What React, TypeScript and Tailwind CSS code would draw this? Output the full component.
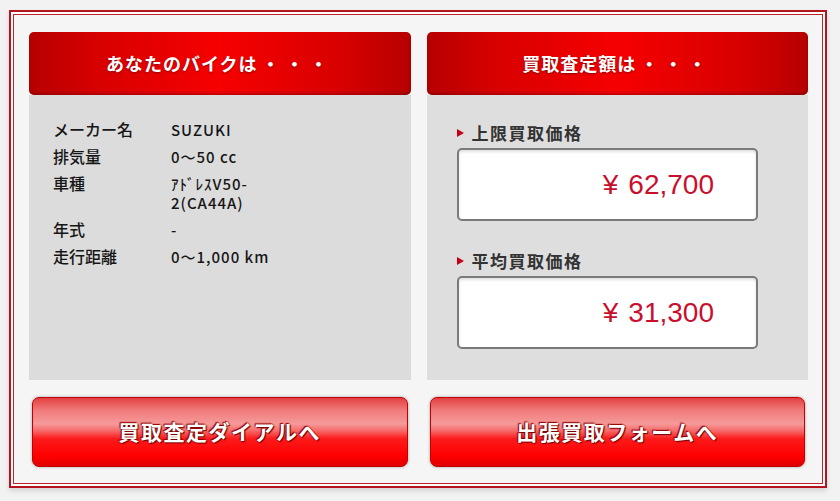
import React from 'react';

const jp = { fontFamily: '"Noto Sans CJK JP", "Noto Sans", sans-serif' };

const specs: Array<{ label: string; value: string[] }> = [
  { label: 'メーカー名', value: ['SUZUKI'] },
  { label: '排気量', value: ['0〜50 cc'] },
  { label: '車種', value: ['ｱﾄﾞﾚｽV50-', '2(CA44A)'] },
  { label: '年式', value: ['-'] },
  { label: '走行距離', value: ['0〜1,000 km'] },
];

const prices = [
  { label: '上限買取価格', amount: '62,700' },
  { label: '平均買取価格', amount: '31,300' },
];

function Header({ children }: { children: React.ReactNode }) {
  return (
    <div className="flex h-[63px] items-center justify-center rounded-[5px] bg-[linear-gradient(90deg,#b60000_0%,#d80000_18%,#f60000_50%,#d80000_82%,#b60000_100%)] shadow-[inset_0_-2px_3px_rgba(90,0,0,0.35)]">
      <span className="text-[18px] font-bold tracking-[1px] text-white [text-shadow:0_1px_2px_rgba(80,0,0,0.6)]">
        {children}
        <span className="ml-[4px] tracking-[6px]">・・・</span>
      </span>
    </div>
  );
}

function GlossButton({ children }: { children: React.ReactNode }) {
  return (
    <div className="px-[3px]">
      <button className="flex h-[70px] w-full items-center justify-center rounded-[7px] border border-[#c20000] bg-[linear-gradient(180deg,#e24040_0%,#f07a7a_18%,#f59a9a_38%,#f66a6a_48%,#fc1a1a_60%,#ff0000_85%,#e00000_100%)] shadow-[0_0_3px_rgba(0,0,0,0.35)]">
        <span className="text-[21px] font-bold tracking-[1.5px] text-white [text-shadow:0_0_2px_#7a0000,1px_1px_1px_#7a0000,-1px_-1px_1px_#9a0000]">
          {children}
        </span>
      </button>
    </div>
  );
}

export default function App() {
  return (
    <div className="h-[501px] w-[840px] bg-[#f2f2f2] pl-[9px] pt-[10px]" style={jp}>
      <div className="h-[478px] w-[818px] border-2 border-[#b3141f] bg-white p-[2px] shadow-[0_3px_5px_rgba(0,0,0,0.12)]">
        <div className="grid h-full grid-cols-2 gap-x-[16px] border border-[#c0222c] bg-[#f5f5f5] pl-[15px] pr-[14px] pt-[17px]">
          {/* left column */}
          <div className="flex flex-col">
            <Header>あなたのバイクは</Header>
            <div className="h-[285px] bg-[#dcdcdc] pl-[24px] pt-[25px] text-[#161616]">
              <div className="flex flex-col gap-[8px]">
                {specs.map((s) => (
                  <div key={s.label} className="flex text-[15px] font-medium leading-[19px]">
                    <div className="w-[118px] text-[16px]">{s.label}</div>
                    <div className="tracking-[1px]">
                      {s.value.map((v) => (
                        <div key={v}>{v}</div>
                      ))}
                    </div>
                  </div>
                ))}
              </div>
            </div>
            <div className="mt-[17px]">
              <GlossButton>買取査定ダイアルへ</GlossButton>
            </div>
          </div>

          {/* right column */}
          <div className="flex flex-col">
            <Header>買取査定額は</Header>
            <div className="h-[285px] bg-[#dedede] pl-[30px] pr-[50px] pt-[28px]">
              {prices.map((p, i) => (
                <div key={p.label} className={i > 0 ? 'mt-[30px]' : ''}>
                  <div className="flex h-[20px] items-center">
                    <svg width="7" height="8" viewBox="0 0 7 8" className="mr-[8px]">
                      <polygon points="0,0 7,4 0,8" fill="#c40018" />
                    </svg>
                    <span className="text-[17px] font-bold tracking-[1.5px] text-[#333]">{p.label}</span>
                  </div>
                  <div className="mt-[5px] flex h-[73px] items-center justify-end rounded-[5px] border-2 border-[#7a7a7a] bg-white pr-[42px] shadow-[inset_0_2px_3px_rgba(0,0,0,0.12)]">
                    <span
                      className="text-[28px] text-[#c8102e]"
                      style={{ fontFamily: '"Liberation Sans", Arial, sans-serif' }}
                    >
                      <span className="mr-[10px]">¥</span>
                      {p.amount}
                    </span>
                  </div>
                </div>
              ))}
            </div>
            <div className="mt-[17px]">
              <GlossButton>出張買取フォームへ</GlossButton>
            </div>
          </div>
        </div>
      </div>
    </div>
  );
}
